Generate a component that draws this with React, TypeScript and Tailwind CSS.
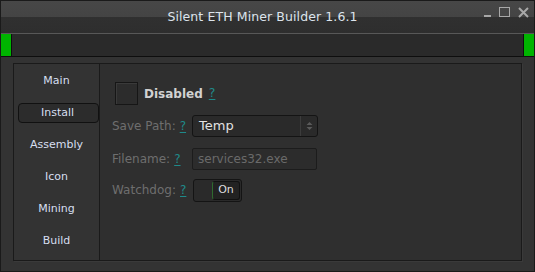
import React from 'react';

const tabs = ['Main', 'Install', 'Assembly', 'Icon', 'Mining', 'Build'];

function Help() {
  return <span className="ml-1 text-[#1f8a8a] underline underline-offset-2">?</span>;
}

export default function App() {
  return (
    <div className="w-[535px] h-[272px] overflow-hidden bg-[#333333] border border-[#1a1a1a] flex flex-col font-['DejaVu_Sans',sans-serif] text-[11px]">
      {/* title bar */}
      <div className="relative h-[33px] shrink-0 bg-[linear-gradient(#474747_0,#444444_16px,#303030_16px,#2e2e2e_100%)] border-b border-[#585858] flex items-center justify-center pr-[10px]">
        <span className="text-[12.5px] text-[#dde4ec] tracking-[0.1px] pt-[1px]">Silent ETH Miner Builder 1.6.1</span>
        <div className="absolute right-[5px] top-[5px] flex items-center gap-[8px] text-[#a8a8a8]">
          <div className="w-[7px] h-[2px] bg-[#a8a8a8] mt-[8px]" />
          <div className="w-[11px] h-[10px] border-[1.5px] border-[#a8a8a8]" />
          <svg width="11" height="11" viewBox="0 0 11 11" className="mt-[1px]">
            <path d="M1 1 L10 10 M10 1 L1 10" stroke="#a8a8a8" strokeWidth="2" />
          </svg>
        </div>
      </div>

      {/* progress strip */}
      <div className="h-[23px] shrink-0 bg-[#2a2a2a] border-b border-[#0e0e0e] flex justify-between">
        <div className="w-[11px] bg-[#00b400] border-r border-[#0e0e0e]" />
        <div className="w-[11px] bg-[#00b400] border-l border-[#0e0e0e]" />
      </div>

      {/* body */}
      <div className="flex-1 pl-[12px] pr-[12px] pt-[6px] pb-[10px] flex">
        <div className="flex-1 flex border border-[#1a1a1a] shadow-[1px_1px_0_#3a3a3a]">
          {/* tabs column */}
          <div className="w-[85px] shrink-0 flex flex-col pt-[1px] text-[#d6dff0]">
            {tabs.map((t) =>
              t === 'Install' ? (
                <div key={t} className="h-[32px] flex items-center">
                  <div className="ml-[4px] w-[82px] h-[20px] rounded-[4px] border border-[#111111] bg-[#2c2c2c] flex items-center justify-center pr-[2px]">
                    {t}
                  </div>
                </div>
              ) : (
                <div key={t} className="h-[32px] flex items-center justify-center">
                  {t}
                </div>
              )
            )}
          </div>

          {/* content */}
          <div className="flex-1 border-l border-[#1a1a1a] bg-[#2f2f2f] pl-[15px] pt-[18px] flex flex-col">
            <div className="flex items-center h-[23px]">
              <div className="w-[23px] h-[23px] bg-[#2c2c2c] border border-[#161616] shadow-[inset_1px_1px_0_#3a3a3a]" />
              <span className="ml-[6px] text-[12px] font-bold text-[#d2d2d2]">Disabled</span>
              <span className="text-[12.5px] ml-[2px]"><Help /></span>
            </div>

            <div className="flex items-center h-[22px] mt-[10px] -ml-[3px]">
              <span className="w-[80px] text-[12px] text-[#6e6e6e]">Save Path:<Help /></span>
              <div className="w-[126px] h-[22px] rounded-[3px] border border-[#141414] bg-[#2a2a2a] flex items-center">
                <span className="flex-1 pl-[6px] text-[13px] text-[#e2e2e2]">Temp</span>
                <div className="w-[17px] h-full border-l border-[#3c3c3c] flex flex-col items-center justify-center gap-[1px]">
                  <svg width="7" height="10" viewBox="0 0 7 10">
                    <path d="M0.5 4 L3.5 1 L6.5 4 Z M0.5 6 L3.5 9 L6.5 6 Z" fill="#5a5a5a" />
                  </svg>
                </div>
              </div>
            </div>

            <div className="flex items-center h-[22px] mt-[11px] -ml-[3px]">
              <span className="w-[80px] text-[12px] text-[#6e6e6e]">Filename:<Help /></span>
              <div className="w-[125px] h-[22px] rounded-[2px] border border-[#1c1c1c] bg-[#2c2c2c] flex items-center pl-[5px] text-[12px] text-[#6a6a6a]">
                services32.exe
              </div>
            </div>

            <div className="flex items-center h-[24px] mt-[8px] -ml-[3px]">
              <span className="w-[81px] text-[12px] text-[#6e6e6e]">Watchdog:<Help /></span>
              <div className="w-[49px] h-[23px] rounded-[3px] border border-[#141414] bg-[#2a2a2a] flex justify-end p-[1px]">
                <div className="w-[28px] h-full rounded-[3px] border border-[#111111] border-l-[#2f6a2f] bg-[#222222] flex items-center justify-center text-[11px] text-[#dcdcdc]">
                  On
                </div>
              </div>
            </div>
          </div>
        </div>
      </div>
    </div>
  );
}
